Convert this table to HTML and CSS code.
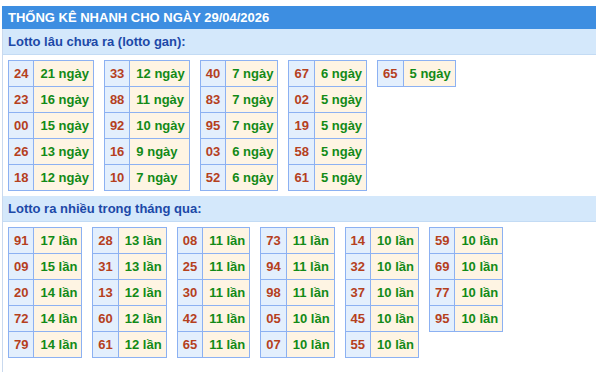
FILE: index.html
```html
<!DOCTYPE html>
<html lang="vi">
<head>
<meta charset="utf-8">
<title>Thống kê nhanh</title>
<link rel="stylesheet" href="styles.css">
</head>
<body>
<div class="topclip"><div class="toptext">Thống kê nhanh: dự đoán xổ số, thống kê gan gấp</div></div>
<div class="box">
  <div class="hd">THỐNG KÊ NHANH CHO NGÀY 29/04/2026</div>
  <div class="sub">Lotto lâu chưa ra (lotto gan):</div>
  <div class="tables">
    <table class="t"><tr><td class="n">24</td><td class="v">21 ngày</td></tr><tr><td class="n">23</td><td class="v">16 ngày</td></tr><tr><td class="n">00</td><td class="v">15 ngày</td></tr><tr><td class="n">26</td><td class="v">13 ngày</td></tr><tr><td class="n">18</td><td class="v">12 ngày</td></tr></table>
    <table class="t"><tr><td class="n">33</td><td class="v">12 ngày</td></tr><tr><td class="n">88</td><td class="v">11 ngày</td></tr><tr><td class="n">92</td><td class="v">10 ngày</td></tr><tr><td class="n">16</td><td class="v">9 ngày</td></tr><tr><td class="n">10</td><td class="v">7 ngày</td></tr></table>
    <table class="t"><tr><td class="n">40</td><td class="v">7 ngày</td></tr><tr><td class="n">83</td><td class="v">7 ngày</td></tr><tr><td class="n">95</td><td class="v">7 ngày</td></tr><tr><td class="n">03</td><td class="v">6 ngày</td></tr><tr><td class="n">52</td><td class="v">6 ngày</td></tr></table>
    <table class="t"><tr><td class="n">67</td><td class="v">6 ngày</td></tr><tr><td class="n">02</td><td class="v">5 ngày</td></tr><tr><td class="n">19</td><td class="v">5 ngày</td></tr><tr><td class="n">58</td><td class="v">5 ngày</td></tr><tr><td class="n">61</td><td class="v">5 ngày</td></tr></table>
    <table class="t"><tr><td class="n">65</td><td class="v">5 ngày</td></tr></table>
  </div>
  <div class="sub">Lotto ra nhiều trong tháng qua:</div>
  <div class="tables">
    <table class="t"><tr><td class="n">91</td><td class="v">17 lần</td></tr><tr><td class="n">09</td><td class="v">15 lần</td></tr><tr><td class="n">20</td><td class="v">14 lần</td></tr><tr><td class="n">72</td><td class="v">14 lần</td></tr><tr><td class="n">79</td><td class="v">14 lần</td></tr></table>
    <table class="t"><tr><td class="n">28</td><td class="v">13 lần</td></tr><tr><td class="n">31</td><td class="v">13 lần</td></tr><tr><td class="n">13</td><td class="v">12 lần</td></tr><tr><td class="n">60</td><td class="v">12 lần</td></tr><tr><td class="n">61</td><td class="v">12 lần</td></tr></table>
    <table class="t"><tr><td class="n">08</td><td class="v">11 lần</td></tr><tr><td class="n">25</td><td class="v">11 lần</td></tr><tr><td class="n">30</td><td class="v">11 lần</td></tr><tr><td class="n">42</td><td class="v">11 lần</td></tr><tr><td class="n">65</td><td class="v">11 lần</td></tr></table>
    <table class="t"><tr><td class="n">73</td><td class="v">11 lần</td></tr><tr><td class="n">94</td><td class="v">11 lần</td></tr><tr><td class="n">98</td><td class="v">11 lần</td></tr><tr><td class="n">05</td><td class="v">10 lần</td></tr><tr><td class="n">07</td><td class="v">10 lần</td></tr></table>
    <table class="t"><tr><td class="n">14</td><td class="v">10 lần</td></tr><tr><td class="n">32</td><td class="v">10 lần</td></tr><tr><td class="n">37</td><td class="v">10 lần</td></tr><tr><td class="n">45</td><td class="v">10 lần</td></tr><tr><td class="n">55</td><td class="v">10 lần</td></tr></table>
    <table class="t"><tr><td class="n">59</td><td class="v">10 lần</td></tr><tr><td class="n">69</td><td class="v">10 lần</td></tr><tr><td class="n">77</td><td class="v">10 lần</td></tr><tr><td class="n">95</td><td class="v">10 lần</td></tr></table>
  </div>
  <div class="next">Lô tô đầu đuôi miền Bắc</div>
</div>
</body>
</html>
```

FILE: styles.css
```css
html, body {
  margin: 0;
  padding: 0;
  background: #ffffff;
  overflow: hidden;
}
body {
  font-family: "Liberation Sans", Arial, sans-serif;
  font-size: 13px;
}
.topclip {
  height: 6px;
  overflow: hidden;
  padding-left: 10px;
}
.toptext {
  margin-top: -17px;
  line-height: 18px;
  font-size: 15px;
  font-weight: bold;
  color: #1346c8;
  white-space: nowrap;
}
.box {
  margin-left: 2px;
  width: 620px;
  border-left: 1px solid #c9d9ee;
}
.hd {
  margin-left: -1px;
  height: 23px;
  line-height: 23px;
  padding-left: 6px;
  background: #3d8ee1;
  color: #ffffff;
  font-weight: bold;
  font-size: 13px;
  white-space: nowrap;
}
.sub {
  height: 25px;
  line-height: 25px;
  padding-left: 5px;
  background: #d4e8fb;
  border-bottom: 1px solid #c3dbf4;
  color: #1c49a8;
  font-weight: bold;
  font-size: 13px;
}
.tables {
  display: flex;
  align-items: flex-start;
  gap: 10px;
  padding: 5px 0 5px 5px;
}
.t {
  border-collapse: collapse;
}
.t td {
  border: 1px solid #8cb1f2;
  height: 25px;
  padding: 0;
  line-height: 15px;
  font-weight: bold;
  white-space: nowrap;
}
.t td.n {
  background: #e3effd;
  color: #b5401d;
  padding: 0 5px;
  text-align: center;
}
.t td.v {
  background: #fef4e3;
  color: #128a17;
  padding: 0 4px 0 6px;
}
.next {
  padding: 13px 0 0 104px;
  font-weight: bold;
  color: #1346c8;
  font-size: 13px;
  white-space: nowrap;
}
```
